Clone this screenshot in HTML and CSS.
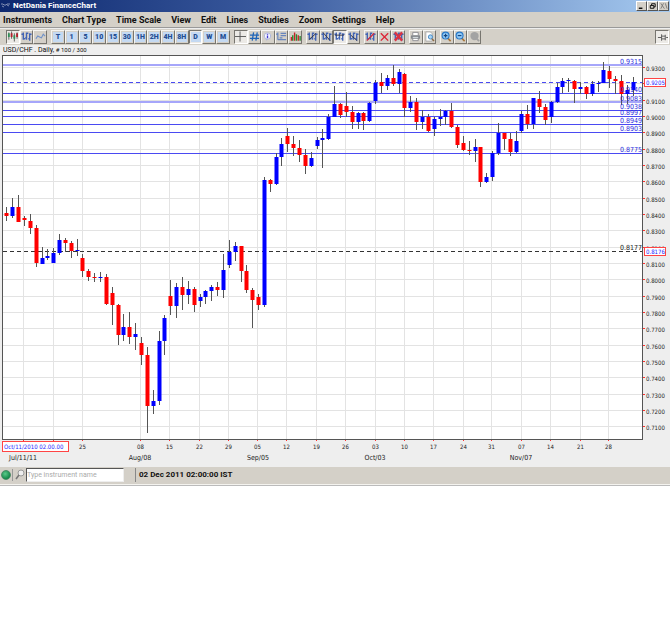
FILE: index.html
```html
<!DOCTYPE html>
<html lang="en">
<head>
<meta charset="utf-8">
<title>NetDania FinanceChart</title>
<link rel="stylesheet" href="styles.css">
</head>
<body>
<svg class="defs" width="0" height="0" aria-hidden="true">
  <symbol id="bars" viewBox="0 0 12 11"><path d="M2.5 1v8M0.500 3h2M2.500 8h2M6 1v8M4.500 7h1.500M6 2h2M9.500 2v8M8 8h1.500M9.500 3h2" stroke="#4264b4" stroke-width="1.500" fill="none"/></symbol>
  <symbol id="lens" viewBox="0 0 12 12"><path d="M7 7.500l3.500 3.500" stroke="#a8763c" stroke-width="1.800"/><circle cx="5" cy="5" r="3.800" fill="#8fc8f5" stroke="#2878c8" stroke-width="1.200"/></symbol>
</svg>
<header class="titlebar">
  <svg class="logo" viewBox="0 0 10 8" aria-hidden="true"><path d="M0 2h2l1 1h2l1-1h3M1 4l2 1M6 3l2 1" stroke="#8290b5" fill="none"/></svg>
  <h1 class="title">NetDania FinanceChart</h1>
  <div class="window-buttons">
    <button class="win" aria-label="Minimize"><svg viewBox="0 0 10 8"><path d="M2 6.500h4" stroke="#000" stroke-width="1.500"/></svg></button>
    <button class="win" aria-label="Restore"><svg viewBox="0 0 10 8"><path d="M4 3V1.500h4v3.500H6.500M2.500 3.500h4v3h-4z" stroke="#000" fill="none"/></svg></button>
    <button class="win" aria-label="Close"><svg viewBox="0 0 10 8"><path d="M2 1l4 6M5 1L2 7M7 1l2 6" stroke="#777" fill="none"/></svg></button>
  </div>
</header>
<nav class="menu" aria-label="Main">
  <button>Instruments</button><button>Chart Type</button><button>Time Scale</button><button>View</button><button>Edit</button><button>Lines</button><button>Studies</button><button>Zoom</button><button>Settings</button><button>Help</button>
</nav>
<div class="toolbar" role="toolbar" aria-label="Chart tools">
  <div class="group g3">
    <button class="tool on" aria-label="Candles"><svg viewBox="0 0 12 11"><path d="M2 1v8M5 0v8M8 2v9M11 1v7" stroke="#555"/><path d="M2 2v4M8 4v4" stroke="#2f8f55" stroke-width="2"/><path d="M5 2v4M11 2v4" stroke="#b3202c" stroke-width="2"/></svg></button>
    <button class="tool" aria-label="Bars"><svg viewBox="0 0 12 11"><use href="#bars"/></svg></button>
    <button class="tool" aria-label="Line"><svg viewBox="0 0 12 11"><path d="M1 8l2-3 2 1 2 1 2-4 2 2" stroke="#6d90c8" fill="none" stroke-width="1.200"/></svg></button>
  </div>
  <div class="group g13">
    <button class="tool period"><span>T</span></button><button class="tool period"><span>1</span></button><button class="tool period"><span>5</span></button><button class="tool period"><span>10</span></button><button class="tool period"><span>15</span></button><button class="tool period"><span>30</span></button><button class="tool period"><span>1H</span></button><button class="tool period"><span>2H</span></button><button class="tool period"><span>4H</span></button><button class="tool period"><span>8H</span></button><button class="tool period on"><span>D</span></button><button class="tool period"><span>W</span></button><button class="tool period"><span>M</span></button>
  </div>
  <div class="group g5">
    <button class="tool on" aria-label="Crosshair"><svg viewBox="0 0 12 11"><path d="M5.500 0v11M0 5.500h12" stroke="#555"/></svg></button>
    <button class="tool" aria-label="Grid"><svg viewBox="0 0 12 11"><path d="M5 1L3.500 10M9 1L7.500 10M1 4h10M1 7.500h10" stroke="#1f65b8" stroke-width="1.400"/></svg></button>
    <button class="tool" aria-label="Information"><svg viewBox="0 0 12 11"><path d="M4 8l1 2 2-2" fill="#a8b2d8"/><circle cx="6" cy="5" r="3.500" fill="#f6f7ff" stroke="#a8b2d8"/><path d="M6 2.500v1M6 4.500v3" stroke="#4037d0" stroke-width="1.500"/></svg></button>
    <button class="tool" aria-label="Legend"><svg viewBox="0 0 12 11"><path d="M2 1v8M0 3h2M2 9h9M4 7h3M5 2h6M5 4.500h6" stroke="#6785bd" stroke-width="1.300" fill="none"/></svg></button>
    <button class="tool" aria-label="Volume"><svg viewBox="0 0 12 11"><path d="M1.500 10V6M5 10V1M9 10V4" stroke="#c8232b" stroke-width="1.500"/><path d="M3 10V4M7 10V3M11 10V5" stroke="#268a2e" stroke-width="1.500"/></svg></button>
  </div>
  <div class="group g4">
    <button class="tool" aria-label="Trend line"><svg viewBox="0 0 12 11"><use href="#bars"/><path d="M2 9l8-7" stroke="#334"/></svg></button>
    <button class="tool" aria-label="Ray"><svg viewBox="0 0 12 11"><use href="#bars"/><path d="M2 1l8 9" stroke="#334"/></svg></button>
    <button class="tool on" aria-label="Horizontal line"><svg viewBox="0 0 12 11"><use href="#bars"/><path d="M1 4h10" stroke="#334"/></svg></button>
    <button class="tool" aria-label="Fibonacci"><svg viewBox="0 0 12 11"><use href="#bars"/><path d="M3 4l7 6" stroke="#334"/></svg></button>
  </div>
  <div class="group g3">
    <button class="tool" aria-label="Edit line"><svg viewBox="0 0 12 11"><use href="#bars"/><path d="M2 10l8-8" stroke="#d02c42" stroke-width="1.500"/></svg></button>
    <button class="tool" aria-label="Delete"><svg viewBox="0 0 12 11"><path d="M2 2l8 8M10 2l-8 8" stroke="#dc2638" stroke-width="1.500"/></svg></button>
    <button class="tool" aria-label="Delete all"><svg viewBox="0 0 12 11"><use href="#bars"/><path d="M2 1l8 9M10 1L2 10" stroke="#d83345" stroke-width="2.500"/></svg></button>
  </div>
  <div class="group g2">
    <button class="tool" aria-label="Print"><svg viewBox="0 0 12 11"><path d="M3 4V1h6v3M3 7v3h6V7" fill="#fff" stroke="#8b8b91"/><rect x="1" y="4" width="10" height="4" rx="1" fill="#85898e"/><path d="M3 6.500h6" stroke="#dfe7ea"/></svg></button>
    <button class="tool" aria-label="Print preview"><svg viewBox="0 0 12 11"><path d="M2 .5h5l2 2v8H2z" fill="#fff" stroke="#a8a8a8"/><circle cx="7" cy="6" r="2.300" fill="#a8d4f5" stroke="#4385c0"/><path d="M8.500 8l2.500 2.500" stroke="#8c6a45" stroke-width="1.500"/></svg></button>
  </div>
  <div class="group g3">
    <button class="tool" aria-label="Zoom in"><svg viewBox="0 0 12 12"><use href="#lens"/><path d="M3 5h4M5 3v4" stroke="#14427c" stroke-width="1.200"/></svg></button>
    <button class="tool" aria-label="Zoom out"><svg viewBox="0 0 12 12"><use href="#lens"/><path d="M3 5h4" stroke="#14427c" stroke-width="1.200"/></svg></button>
    <button class="tool" aria-label="Reset zoom" disabled><svg viewBox="0 0 12 12"><circle cx="6" cy="5.500" r="4.500" fill="#a3a3a3"/><path d="M8 8l3 3" stroke="#a3a3a3" stroke-width="2"/></svg></button>
  </div>
  <button class="tool on pin" aria-label="Pin toolbar"><svg viewBox="0 0 12 11"><path d="M1 5.500h4M5 2v7M5 4h4M5 7h4M9 2.500v6M10 5.500h2" stroke="#555" fill="none"/></svg></button>
</div>
<main class="chart">
  <p class="instrument">USD/CHF . Daily, <small># 100 / 300</small></p>
  <svg class="plot" id="plot" viewBox="0 55 670 412" role="img" aria-label="USD/CHF daily candlesticks"></svg>
</main>
<footer class="status">
  <span class="led"></span>
  <label class="search" for="instrument"><svg viewBox="0 0 10 12" role="img" aria-label="Find instrument"><circle cx="6" cy="4" r="3" fill="#eee" stroke="#999"/><path d="M4 6L1 10" stroke="#777" stroke-width="1.500"/></svg></label>
  <input id="instrument" type="text" placeholder="Type instrument name">
  <time class="clock">02 Dec 2011 02:00:00 IST</time>
</footer>
<script src="chart.js"></script>
</body>
</html>
```
FILE: styles.css
```css
* { box-sizing: border-box; }
body { margin: 0; background: #fff; color: #111; font-family: Roboto, "Liberation Sans", sans-serif; }
button { font: inherit; color: inherit; padding: 0; border: 0; background: none; }
.defs { position: absolute; }
.titlebar { display: flex; align-items: center; height: 12px; padding: 0 1px; background: linear-gradient(90deg, #0d286e, #3a5a9e 40%, #a6caf0); }
.logo { width: 10px; height: 8px; }
.title { margin: 0 0 0 2px; color: #fff; font-size: 8px; line-height: 12px; font-weight: 700; }
.window-buttons { display: flex; margin-left: auto; }
.win { width: 11px; height: 10px; background: #d4d0c8; border: 1px solid; border-color: #fff #555 #555 #fff; }
.win svg { display: block; width: 100%; height: 100%; }
.menu { display: flex; gap: 10px; height: 16px; padding: 0 3px; background: #d4d0c8; border-bottom: 1px solid #999; font-size: 9px; line-height: 16px; font-weight: 700; }
.toolbar { display: flex; align-items: center; gap: 4px; height: 17px; padding: 0 1px 0 6px; background: #d4d0c8; border-top: 1px solid #eee; }
.group { display: grid; grid-auto-flow: column; grid-auto-columns: 1fr; height: 15px; }
.g2 { width: 27px; }
.g3 { width: 41px; }
.g4 { width: 54px; }
.g5 { width: 68px; }
.g13 { width: 179px; }
.tool { display: flex; align-items: center; justify-content: center; height: 14px; border: 1px solid; border-color: #f5f4f0 #77756f #77756f #f5f4f0; }
.tool svg { width: 11px; height: 11px; }
.tool.on { background: #eceae6; border-color: #77756f #fff #fff #77756f; }
.pin { width: 14px; margin-left: auto; }
.period span { width: 10px; height: 10px; background: #c4d9f2; color: #234d92; font-size: 7px; line-height: 10px; font-weight: 900; text-align: center; }
.chart { background: #eee; }
.instrument { margin: 0; padding-left: 3px; font-size: 7px; line-height: 10px; height: 10px; }
.instrument small { font-size: 6px; }
.plot { display: block; width: 100%; font-family: "DejaVu Sans Condensed", "Liberation Sans", sans-serif; }
.plot-bg { fill: #fff; }
.frame { fill: none; stroke: #555; }
.grid { stroke: #e3e3e3; }
.tick { stroke: #ff3030; }
.level { stroke: #4a4af2; }
.level-soft { stroke: #a6a6fa; stroke-width: 2; }
.dashed { stroke-dasharray: 4 3; }
.base { stroke: #333; stroke-dasharray: 4 3; }
.wick { stroke: #555; }
.up { fill: #00f; }
.down { fill: #f00; }
.axis { font-size: 6px; fill: #222; }
.month { font-size: 7px; }
.centered { text-anchor: middle; }
.level-text { font-size: 7px; fill: #2b2bdc; text-anchor: end; }
.base-text { fill: #222; }
.tag { fill: #fff; stroke: #f44; }
.tag-text { fill: #22f; }
.status { display: flex; align-items: center; height: 19px; padding: 0 1px 2px; background: #d4d0c8; border-bottom: 1px solid #bbb; box-shadow: inset 0 -1px #f4f3ef; }
.led { width: 10px; height: 10px; border-radius: 50%; background: radial-gradient(circle at 40% 35%, #5cc98a, #158a4b 70%); border: 1px solid #4c8a66; }
.search { margin-left: 1px; padding-left: 2px; border-left: 1px solid #999; }
.search svg { display: block; width: 10px; height: 12px; }
.status input { width: 98px; height: 14px; margin-left: 1px; padding: 0; border: 1px solid; border-color: #555 #eee #eee #555; background: #fff; font-family: Roboto, sans-serif; font-size: 7px; }
.status input::placeholder { color: #aaa; }
.clock { margin-left: 11px; padding-left: 3px; border-left: 1px solid #888; font-size: 8px; line-height: 14px; font-weight: 700; }
```
FILE: chart.js
```js
// Each candle: direction, then high, body top, body bottom and low on the plot's vertical scale.
const candles = `R207,213,216,221 B198,207,216,218 R195,207,222,222 R216,218,220,226 R214,221,228,234 R225,228,263,267
B247,258,264,264 B249,256,258,260 B248,253,263,263 B234,240,253,255 R238,240,243,252 R241,243,251,258
B239,250,251,256 R254,258,271,277 R269,271,277,281 R273,277,278,282 B272,277,278,282 R274,277,304,305
R287,293,305,325 R304,305,335,345 B314,327,335,341 R312,327,337,344 B323,334,337,350 R337,343,355,365
R347,355,406,433 B390,401,406,414 B331,341,401,405 B315,318,341,355 R280,296,306,315 B283,287,306,318
R277,287,295,310 B281,289,295,304 R287,289,305,312 B294,297,301,307 B290,291,297,304 B285,287,291,301
R282,287,290,296 B254,270,290,298 B240,252,265,268 B242,246,252,261 R246,246,271,282 R265,271,290,293
R288,290,300,328 R294,297,305,310 B177,180,305,307 R179,180,184,192 B153,157,184,185 B138,144,157,166
R128,136,144,152 R136,144,148,156 R140,148,155,162 R149,155,166,174 B152,158,166,167 B137,140,146,149
B129,138,140,168 B114,117,139,140 B86,104,117,117 R103,104,115,118 R92,106,112,117 R106,112,122,129
B112,113,122,129 R112,113,121,130 B102,103,121,122 B80,83,101,104 R73,82,86,93 B75,78,86,90
R65,78,84,86 B69,72,84,93 R73,74,108,117 B96,102,108,112 R98,102,122,130 B110,117,122,129
R114,117,131,132 B117,119,129,136 B109,117,119,126 B110,111,117,125 R103,111,127,128 R125,127,145,148
R136,143,150,151 R141,150,151,155 B139,147,151,162 R147,147,182,187 B173,177,182,183 B151,153,177,181
B123,133,153,155 R133,133,139,150 R133,139,152,156 B131,141,152,153 B111,114,131,133 R105,114,124,129
B98,98,124,129 R91,99,107,113 R104,107,120,125 B101,102,117,123 B83,87,102,103 B78,81,87,93
B78,80,81,92 R80,81,89,103 B82,87,89,94 R86,87,94,99 B81,84,94,96 B81,83,84,92
B62,70,83,83 R66,71,79,88 R76,79,81,94 R75,81,94,105 B85,90,94,104 B77,82,90,96`.split(/\s+/);

const weeks = [[23, ''], [53, ''], [82, '25'], [140, '08'], [169, '15'], [199, '22'], [228, '29'], [257, '05'],
  [286, '12'], [316, '19'], [345, '26'], [375, '03'], [404, '10'], [433, '17'], [463, '24'], [491, '31'],
  [521, '07'], [550, '14'], [580, '21'], [608, '28']];
const months = [[23, 'Jul/11/11'], [140, 'Aug/08'], [258, 'Sep/05'], [375, 'Oct/03'], [521, 'Nov/07']];
const levels = [[65, '0.9315', true], [93, '0.9140'], [102, '0.9083', true], [110, '0.9038'], [116, '0.8997'],
  [124, '0.8949'], [132, '0.8903'], [153, '0.8775']];

const line = (c, x1, y1, x2, y2) => `<line class="${c}" x1="${x1}" y1="${y1}" x2="${x2}" y2="${y2}"/>`;
const rect = (c, x, y, w, h) => `<rect class="${c}" x="${x}" y="${y}" width="${w}" height="${h}"/>`;
const text = (c, x, y, s) => `<text class="${c}" x="${x}" y="${y}">${s}</text>`;
const out = [rect('plot-bg', 3, 55, 639, 384)];

for (let i = 0; i <= 22; i++) {
  const y = Math.round(68 + i * 16.34) - 0.5;
  out.push(line('grid', 3, y, 642, y), line('tick', 642, y, 645, y));
  out.push(text('axis', 646, y + 3, (0.93 - i * 0.01).toFixed(4)));
}
for (const [x, label] of weeks) {
  out.push(line('grid', x + 0.5, 56, x + 0.5, 439), line('tick', x + 0.5, 439, x + 0.5, 441));
  out.push(text('axis centered', x + 0.5, 449, label));
}
for (const [x, label] of months) out.push(text('axis month centered', x, 460, label));
out.push(line('base', 3, 251.5, 642, 251.5));
for (const [y, , soft] of levels) {
  out.push(soft ? line('level-soft', 3, y, 642, y) : line('level', 3, y + 0.5, 642, y + 0.5));
}
out.push(line('level dashed', 3, 82.5, 642, 82.5));
candles.forEach((candle, i) => {
  const [high, top, bottom, low] = candle.slice(1).split(',').map(Number);
  const center = Math.round(6.4 + i * 5.853) + 0.5;
  out.push(line('wick', center, high, center, low));
  out.push(rect(candle[0] === 'B' ? 'up' : 'down', center - 2, top, 4, Math.max(1, bottom - top)));
});
for (const [y, label] of levels) out.push(text('level-text', 642, y - 1, label));
out.push(text('level-text base-text', 642, 250, '0.8177'));
out.push(rect('frame', 2.5, 55.5, 640, 384));
out.push(rect('tag', 644.5, 78.5, 21, 8), text('axis tag-text', 646, 85, '0.9205'));
out.push(rect('tag', 644.5, 247.5, 21, 8), text('axis tag-text', 646, 254, '0.8176'));
out.push(rect('tag', 2.5, 441.5, 66, 10), text('axis tag-text', 4, 449, 'Oct/11/2010 02.00.00'));
document.getElementById('plot').innerHTML = out.join('');
```
